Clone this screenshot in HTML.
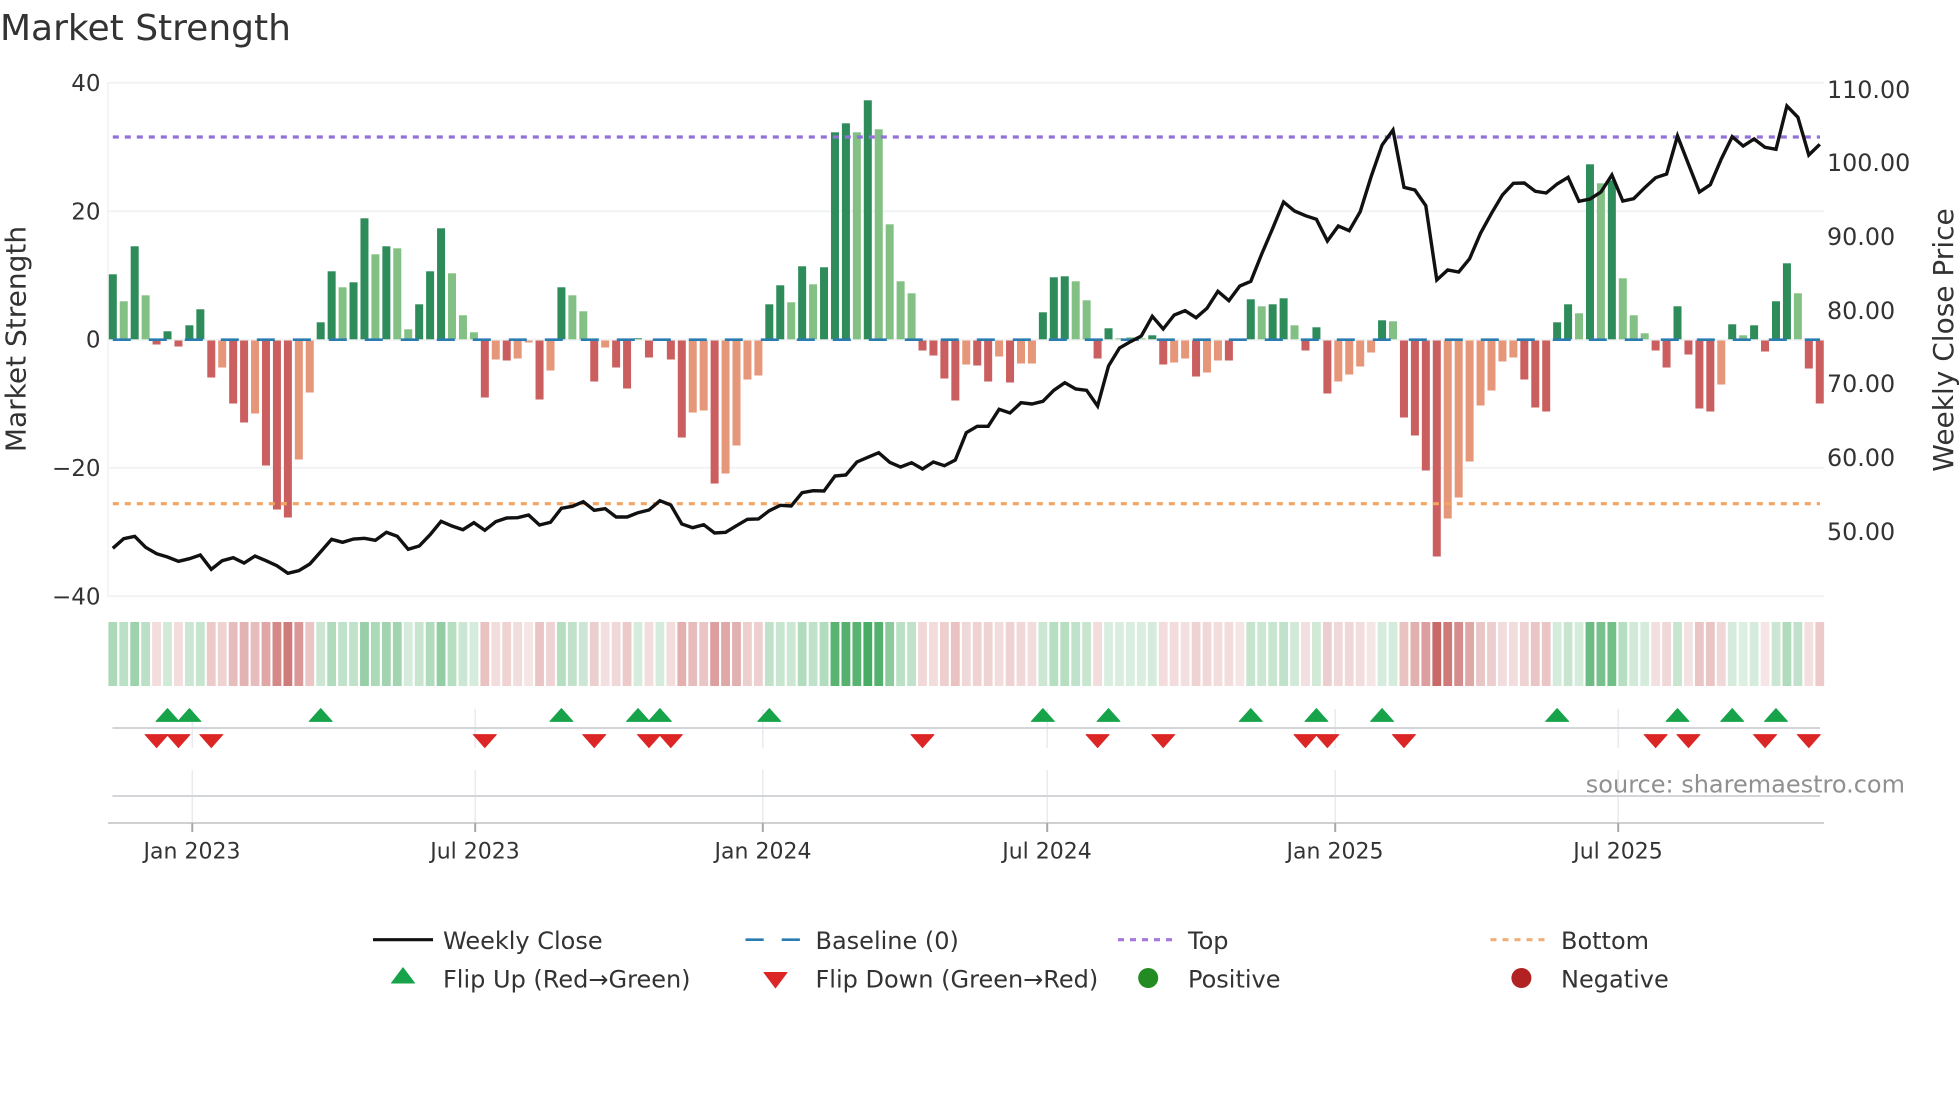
<!DOCTYPE html>
<html lang="en">
<head>
<meta charset="utf-8">
<title>Market Strength</title>
<style>
html,body{margin:0;padding:0;background:#fff;width:1960px;height:1102px;overflow:hidden}
svg{display:block}
text{font-family:"DejaVu Sans","Liberation Sans",sans-serif;fill:#333}
.t{font-size:22px}
.y{font-size:23px}
.r{font-size:23.8px}
.l{font-size:24px}
</style>
</head>
<body>
<svg id="c" xmlns="http://www.w3.org/2000/svg" width="1960" height="1102" viewBox="0 0 1960 1102">
<rect width="1960" height="1102" fill="#fff"/>
<g stroke="#f0f2f4" stroke-width="2" fill="none">
<path d="M108 82.7H1824M108 211.3H1824M108 339.8H1824M108 467.7H1824M108 596.3H1824"/>
<path d="M108 82V597" stroke-width="1.5"/>
</g>
<g id="cells"></g>
<g stroke="#e9ecef" stroke-width="1.6" fill="none">
<path d="M192.3 709V748M475.2 709V748M762.8 709V748M1047.2 709V748M1335.2 709V748M1618.2 709V748"/>
<path d="M192.3 770V823M475.2 770V823M762.8 770V823M1047.2 770V823M1335.2 770V823M1618.2 770V823"/>
</g>
<path d="M112.4 728H1820M112.4 796H1820" stroke="#d3d5d9" stroke-width="2" fill="none"/>
<path d="M108 823H1824" stroke="#cfd0d2" stroke-width="2" fill="none"/>
<path d="M192.3 823V832M475.2 823V832M762.8 823V832M1047.2 823V832M1335.2 823V832M1618.2 823V832" stroke="#a8a8a8" stroke-width="2" fill="none"/>
<g id="bars"></g>
<path d="M112.8 339.7H1820" stroke="#2a7bb0" stroke-width="2.6" stroke-dasharray="18 18" fill="none"/>
<path d="M112.8 137H1820" stroke="#9370db" stroke-width="3.2" stroke-dasharray="6 6" fill="none"/>
<path d="M112.8 503.7H1820" stroke="#f4a460" stroke-width="3.2" stroke-dasharray="6 6" fill="none"/>
<polyline id="price" fill="none" stroke="#111" stroke-width="3.4" stroke-linejoin="miter"/>
<g id="marks"></g>

<text x="0" y="40" font-size="36">Market Strength</text>

<g class="y" text-anchor="end">
<text x="100.5" y="91">40</text>
<text x="100.5" y="219.5">20</text>
<text x="100.5" y="347.5">0</text>
<text x="100.5" y="476">−20</text>
<text x="100.5" y="604.5">−40</text>
</g>
<g class="r">
<text x="1827" y="98">110.00</text>
<text x="1827" y="171">100.00</text>
<text x="1827" y="245">90.00</text>
<text x="1827" y="319">80.00</text>
<text x="1827" y="392">70.00</text>
<text x="1827" y="466">60.00</text>
<text x="1827" y="540">50.00</text>
</g>
<g class="t" text-anchor="middle">
<text x="192" y="858.5">Jan 2023</text>
<text x="475" y="858.5">Jul 2023</text>
<text x="763" y="858.5">Jan 2024</text>
<text x="1047" y="858.5">Jul 2024</text>
<text x="1335" y="858.5">Jan 2025</text>
<text x="1618" y="858.5">Jul 2025</text>
</g>
<text transform="translate(25.5 339) rotate(-90)" text-anchor="middle" font-size="28">Market Strength</text>
<text transform="translate(1953 340) rotate(-90)" text-anchor="middle" font-size="28">Weekly Close Price</text>
<text x="1905" y="792.5" text-anchor="end" class="l" style="fill:#909090">source: sharemaestro.com</text>

<path d="M373 939.7H433" stroke="#111" stroke-width="3.2" fill="none"/>
<path d="M745.5 939.7H800" stroke="#2a7bb0" stroke-width="2.6" stroke-dasharray="18.2 18" fill="none"/>
<path d="M1118 939.7H1173.5" stroke="#a578e0" stroke-width="3.2" stroke-dasharray="6 6" fill="none"/>
<path d="M1490.5 939.7H1546" stroke="#f0ae78" stroke-width="3.2" stroke-dasharray="6 6" fill="none"/>
<polygon points="391.5,983 414.5,983 403,967.8" fill="#16a34a" stroke="#16a34a" stroke-width="1" stroke-linejoin="round"/>
<polygon points="764,972.5 787,972.5 775.5,987.8" fill="#dc2626" stroke="#dc2626" stroke-width="1" stroke-linejoin="round"/>
<circle cx="1148.2" cy="978" r="10" fill="#228b22"/>
<circle cx="1521.4" cy="978" r="10" fill="#b22222"/>
<g class="l">
<text x="443" y="949">Weekly Close</text>
<text x="815.5" y="949">Baseline (0)</text>
<text x="1188" y="949">Top</text>
<text x="1561" y="949">Bottom</text>
<text x="443" y="987.5">Flip Up (Red→Green)</text>
<text x="815.5" y="987.5">Flip Down (Green→Red)</text>
<text x="1188" y="987.5">Positive</text>
<text x="1561" y="987.5">Negative</text>
</g>
</svg>
<script>
(function(){
var NS="http://www.w3.org/2000/svg";
function X(i){return 112.8+10.942*i}
function el(p,n,a){var e=document.createElementNS(NS,n);for(var k in a)e.setAttribute(k,a[k]);p.appendChild(e);return e}
var B="65 38l 93 44l -4 8 -6 14 30 -37 -27l -63 -82 -73l -125 -169 -177 -119l -52l 17 68 52l 57 121 85l 93 91l 10l 35 68 111 66l 24l 7l -57 -19l -20 -18l -2l -59 -30l 52 44l 28l -41 -7l -27 -48 1 -17 0 -19 -97 -72l -70l -143 -133l -105l -39l -35l 35 54 37l 73 55l 72 207 216 207l 239 210l 115l 58l 46l -10 -15 -38 -60 -24l -25 -41 -16l -42 -23l -23l 27 62 63 58l 39l -18 11 1l 2l 1l 4 -24 -22l -18l -36 -32l -20l -20 0 40 33l 35 41 14l -10 12 -53 -41l -34l -26l -12l 19 18l -77 -95 -130 -216 -178l -157l -121l -65l -50l -21l -17l -39 -67 -71 17 35 26l 175 156l 159 61l 24l 6l -10 -27 33 -14 -68 -71 -44l 15 4l 14 -11 38 76 46l -28 -63".split(" ");
var g=document.getElementById("bars");
B.forEach(function(s,i){
 var light=s.slice(-1)=="l",v=parseFloat(s);
 if(!v)return;
 var c=v>0?(light?"#82c084":"#2e8b5a"):(light?"#e69679":"#cb5e5e");
 var y=v>0?339.3-v:340.5,h=Math.abs(v);
 el(g,"rect",{x:X(i)-4,y:y,width:8,height:h,fill:c});
});
var C="g40 g33 g47 g32 r20 g22 r20 g25 g28 r30 r25 r38 r43 r38 r50 r68 r75 r58 r32 g25 g38 g30 g30 g50 g40 g45 g45 g20 g27 g38 g52 g35 g25 g20 r35 r20 r25 r20 r15 r33 r25 g35 g30 g25 r28 r18 r22 r30 g20 r20 g20 r20 r45 r38 r33 r55 r50 r45 r27 r27 g30 g27 g25 g37 g30 g37 g80 g82 g80 g88 g82 g55 g33 g30 r22 r20 r27 r35 r22 r25 r25 r20 r25 r22 r20 g25 g35 g35 g30 g27 r20 g18 g18 g18 g18 g20 r20 r20 r18 r25 r22 r20 r20 r15 g28 g25 g27 g30 g22 r18 g22 r28 r22 r22 r20 r15 g20 g20 r35 r45 r55 r85 r75 r65 r50 r33 r28 r20 r20 r25 r33 r33 g20 g27 g20 g70 g65 g68 g35 g22 g20 r18 r22 g27 r17 r33 r33 r22 g20 g17 g20 r15 g25 g38 g30 r18 r30".split(" ");
g=document.getElementById("cells");
C.forEach(function(s,i){
 el(g,"rect",{x:X(i)-4.4,y:622,width:8.8,height:64,fill:s[0]=="g"?"#2fa04e":"#bf4f4e","fill-opacity":parseInt(s.slice(1))/100});
});
var P1=[625,596,589,622,641,651,664,656,645,688,662,653,669,648,662,677,700,692,672,635,598,607,597,595,601,577,589,628,618,584,544,558,569,548,571,545,534,533,525,555,547,505,499,485,511,506,531,531,518,510,482,495,552,563,554,579,577,557,538,537,512,496,498,458,452,453,408,405,366,352,338,367,381,368,387,366,377,360,278,259,259,208,219,188,192,184,151,128,147,151,198,78,24,5];
var P2=[828,769,807,765,752,773,745,694,722,678,664,582,505,426,453,467,478,543,498,512,455,350,255,210,382,390,437,660,630,636,596,520,460,405,370,369,394,399,372,352,424,417,396,345,423,416,383,353,342,228,312,396,374,297,230,258,237,262,268,138,172,285,253];
var pts=[],i=0;
P1.forEach(function(z){pts.push(X(i).toFixed(1)+","+(340+z/3).toFixed(1));i++});
P2.forEach(function(z){pts.push(X(i).toFixed(1)+","+(60+z/3).toFixed(1));i++});
document.getElementById("price").setAttribute("points",pts.join(" "));
g=document.getElementById("marks");
[5,7,19,41,48,50,60,85,91,104,110,116,132,143,148,152].forEach(function(k){
 var x=X(k);
 el(g,"polygon",{points:(x-11.5)+",721.4 "+(x+11.5)+",721.4 "+x+",708.6",fill:"#16a34a",stroke:"#16a34a","stroke-width":1,"stroke-linejoin":"round"});
});
[4,6,9,34,44,49,51,74,90,96,109,111,118,141,144,151,155].forEach(function(k){
 var x=X(k);
 el(g,"polygon",{points:(x-11.5)+",734.6 "+(x+11.5)+",734.6 "+x+",747.6",fill:"#dc2626",stroke:"#dc2626","stroke-width":1,"stroke-linejoin":"round"});
});
})();
</script>
</body>
</html>
